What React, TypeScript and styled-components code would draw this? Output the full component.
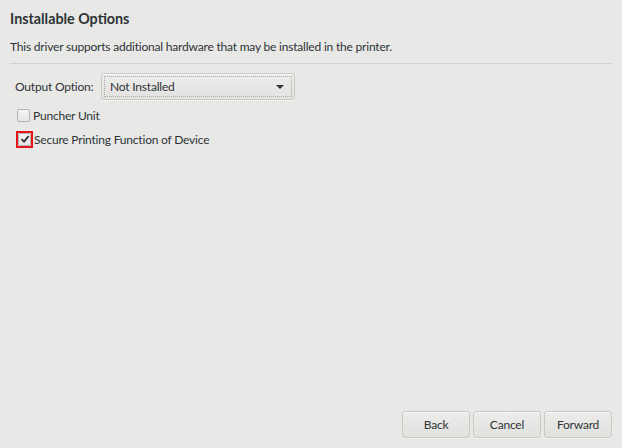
import { createGlobalStyle } from "styled-components";
import styled from "styled-components";

const GlobalStyle = createGlobalStyle`
  html, body {
    margin: 0;
    padding: 0;
    background: #e8e8e7;
  }
  body {
    font-family: Lato, "Open Sans", "DejaVu Sans", sans-serif;
    font-size: 12px;
    letter-spacing: -0.2px;
    color: #2e3436;
  }
`;

const Page = styled.div`
  width: 622px;
  height: 448px;
  box-sizing: border-box;
  padding: 10px;
  display: flex;
  flex-direction: column;
  background: #e8e8e7;
`;

const Title = styled.h1`
  margin: 0;
  font-size: 14.3px;
  font-weight: 700;
  letter-spacing: 0;
  line-height: 18px;
  color: #2e3436;
`;

const Description = styled.p`
  margin: 11px 0 0;
  line-height: 16px;
  color: #2e3436;
`;

const Separator = styled.hr`
  margin: 8px 0 0;
  border: none;
  border-top: 1px solid #d1d1cf;
  height: 0;
`;

const Options = styled.div`
  flex: 1;
  padding: 9px 0 0 5px;
  display: flex;
  flex-direction: column;
`;

const OptionRow = styled.div`
  display: flex;
  align-items: center;
  gap: 10px;
  height: 27px;
`;

const Label = styled.span`
  width: 76px;
  flex: none;
  white-space: nowrap;
`;

const Combo = styled.button`
  width: 194px;
  height: 27px;
  box-sizing: border-box;
  border: 1px solid #c9c9c6;
  border-radius: 3px;
  background: linear-gradient(#ececeb, #e2e2e0);
  box-shadow: inset 0 1px #f7f7f7, 0 1px #f2f2f1;
  padding: 2px;
  display: flex;
  font: inherit;
  letter-spacing: inherit;
  color: inherit;
`;

const ComboFocus = styled.span`
  flex: 1;
  display: flex;
  align-items: center;
  justify-content: space-between;
  border: 1px dotted #a9a9a6;
  padding: 0 7px 0 5px;
`;

const Arrow = styled.span`
  width: 0;
  height: 0;
  border-left: 4px solid transparent;
  border-right: 4px solid transparent;
  border-top: 4px solid #2e3436;
`;

const CheckRow = styled.label<{ $gapTop: number }>`
  display: flex;
  align-items: center;
  height: 20px;
  margin-top: ${({ $gapTop }) => $gapTop}px;
`;

const CheckFrame = styled.span<{ $focused?: boolean }>`
  width: 17px;
  height: 17px;
  box-sizing: border-box;
  border: 2px solid ${({ $focused }) => ($focused ? "#e8141c" : "transparent")};
  display: flex;
  align-items: center;
  justify-content: center;
  margin-left: ${({ $focused }) => ($focused ? "1px" : "0")};
  margin-right: 1px;
`;

const CheckBox = styled.span`
  width: 13px;
  height: 13px;
  flex: none;
  box-sizing: border-box;
  border: 1px solid #b3b3b0;
  border-radius: 2px;
  background: linear-gradient(#f4f4f4, #e6e6e5);
  display: flex;
  align-items: center;
  justify-content: center;
`;

const Footer = styled.div`
  display: flex;
  justify-content: flex-end;
  gap: 3px;
`;

const Button = styled.button`
  width: 68px;
  height: 27px;
  box-sizing: border-box;
  border: 1px solid #c9c9c6;
  border-radius: 3px;
  background: linear-gradient(#ececeb, #e1e1df);
  box-shadow: inset 0 1px #f7f7f7, 0 1px #f2f2f1;
  font: inherit;
  letter-spacing: inherit;
  color: #2e3436;
`;

const Check = () => (
  <svg width="10" height="10" viewBox="0 0 10 10">
    <path d="M1.5 5.2 L4 7.6 L8.6 2.2" fill="none" stroke="#2e3436" strokeWidth="1.8" />
  </svg>
);

export default function App() {
  return (
    <>
      <GlobalStyle />
      <Page>
        <Title>Installable Options</Title>
        <Description>
          This driver supports additional hardware that may be installed in the printer.
        </Description>
        <Separator />
        <Options>
          <OptionRow>
            <Label>Output Option:</Label>
            <Combo>
              <ComboFocus>
                Not Installed
                <Arrow />
              </ComboFocus>
            </Combo>
          </OptionRow>
          <CheckRow $gapTop={5}>
            <CheckFrame>
              <CheckBox />
            </CheckFrame>
            Puncher Unit
          </CheckRow>
          <CheckRow $gapTop={4}>
            <CheckFrame $focused>
              <CheckBox>
                <Check />
              </CheckBox>
            </CheckFrame>
            Secure Printing Function of Device
          </CheckRow>
        </Options>
        <Footer>
          <Button>Back</Button>
          <Button>Cancel</Button>
          <Button>Forward</Button>
        </Footer>
      </Page>
    </>
  );
}
